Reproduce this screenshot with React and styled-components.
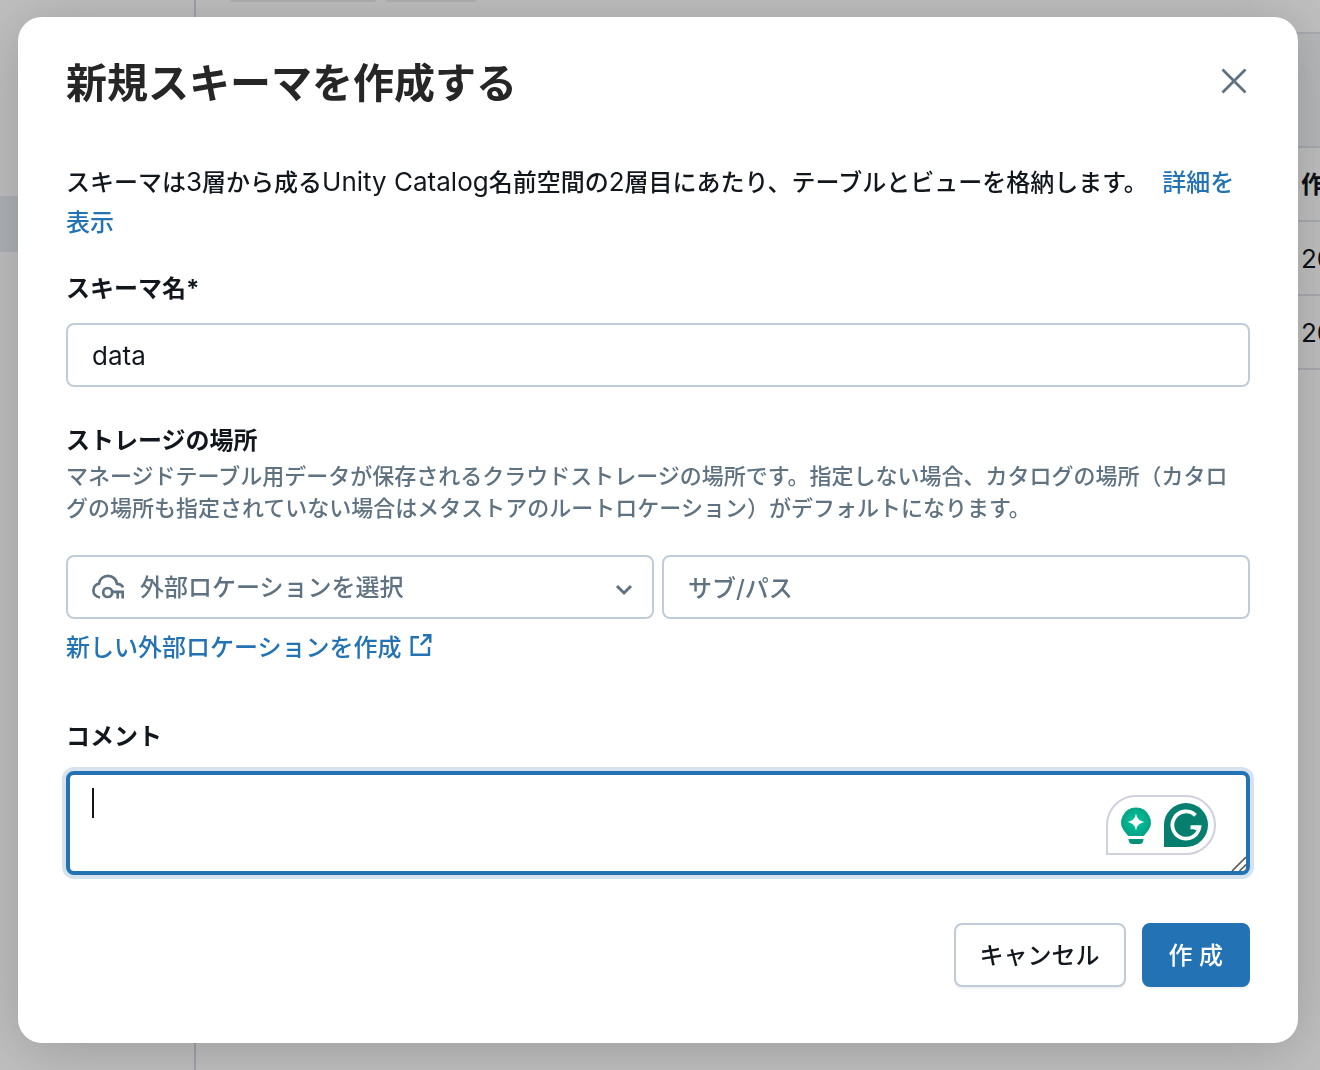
import React from 'react'
import styled, { createGlobalStyle } from 'styled-components'

const GlobalStyle = createGlobalStyle`
* {
  box-sizing: border-box;
}
body {
  margin: 0;
  overflow: hidden;
  background-color: #ffffff;
  color: #11171c;
  font-family: Inter, "Noto Sans CJK JP", sans-serif;
  font-size: 24px;
  font-weight: 500;
  line-height: 40px;
}
input, select, textarea, button {
  font: inherit;
  color: inherit;
}
`

const Page = styled.div`
display: grid;
grid-template-columns: 196px 1fr;
min-height: 100vh;
`

const Sidebar = styled.div`
padding-top: 196px;
border-right: solid 2px #d1d9e1;
`

const SidebarSelected = styled.div`
height: 56px;
background-color: #e8eef4;
`

const Content = styled.div`
display: flex;
flex-direction: column;
overflow: hidden;
`

const Chips = styled.div`
display: flex;
gap: 10px;
height: 32px;
padding-left: 34px;
`

const Chip = styled.div`
width: ${props => props.$wide ? '146px' : '90px'};
height: 2px;
background-color: #ebebeb;
border-radius: 0 0 4px 4px;
`

const Banner = styled.div`
height: 116px;
background-color: #f3f5f8;
border-top: solid 2px #e0e4ea;
border-bottom: solid 2px #e0e4ea;
`

const Table = styled.table`
margin-left: 1098px;
border-spacing: 0;
white-space: nowrap;
`

const Cell = styled.td`
height: 74px;
padding: 2px 0 0 7px;
border-bottom: solid 2px #e0e4ea;
font-size: ${props => props.$head ? '24px' : '26px'};
font-weight: ${props => props.$head ? 700 : 400};
text-align: left;
`

const Overlay = styled.div`
position: fixed;
inset: 0;
padding: 17px 22px 27px 18px;
background-color: rgba(0, 0, 0, 0.25);
`

const Modal = styled.div`
padding: 38px 48px 56px;
background-color: #ffffff;
border-radius: 24px;
box-shadow: 0 6px 60px rgba(0, 0, 0, 0.2);
`

const Header = styled.div`
display: flex;
align-items: flex-start;
justify-content: space-between;
margin-bottom: 52px;
`

const Title = styled.h2`
margin: 0;
color: #262626;
font-size: 41px;
line-height: 56px;
font-weight: 700;
`

const CloseButton = styled.button`
display: flex;
align-items: center;
height: 52px;
padding: 0;
border: none;
background: none;
color: #5f7281;
cursor: pointer;
`

const Text = styled.p`
margin: 0 0 27px;
`

const Latin = styled.span`
font-size: 26px;
font-weight: 400;
line-height: 1;
`

const Link = styled.a`
color: #2272b4;
text-decoration: none;
`

const MoreLink = styled(Link)`
margin-left: 8px;
`

const Label = styled.label`
display: block;
line-height: 38px;
font-weight: 700;
`

const Hint = styled.p`
margin: 0 0 31px;
padding-right: 8px;
color: #5f7281;
font-size: 22px;
line-height: 32px;
`

const Input = styled.input`
display: block;
width: 100%;
height: 64px;
padding: 0 24px;
background-color: #ffffff;
border: solid 2px #c0cdd8;
border-radius: 8px;
outline: none;
font-size: 26px;
font-weight: 400;

&::placeholder {
  color: #5f7281;
  font-size: 24px;
  font-weight: 500;
  opacity: 1;
}
`

const NameField = styled.div`
display: flex;
flex-direction: column;
gap: 15px;
margin-bottom: 35px;
`

const LocationRow = styled.div`
display: grid;
grid-template-columns: 1fr 1fr;
gap: 8px;
margin-bottom: 9px;
`

const SelectBox = styled.div`
position: relative;
`

const Select = styled.select`
appearance: none;
display: block;
width: 100%;
height: 64px;
padding: 2px 64px 0 72px;
background-color: #ffffff;
color: #5f7281;
border: solid 2px #c0cdd8;
border-radius: 8px;
outline: none;
`

const SelectIcon = styled.span`
position: absolute;
top: 16px;
left: ${props => props.$right ? 'auto' : '26px'};
right: ${props => props.$right ? '14px' : 'auto'};
display: flex;
color: #5f7281;
pointer-events: none;
`

const NewLocation = styled(Link)`
display: flex;
align-items: center;
gap: 8px;
width: max-content;
margin-bottom: 50px;
`

const CommentField = styled.div`
display: flex;
flex-direction: column;
gap: 15px;
margin-bottom: 48px;
`

const CommentBox = styled.div`
position: relative;
height: 104px;
`

const TextArea = styled.textarea`
display: block;
width: 100%;
height: 100%;
padding: 8px 22px;
background-color: #ffffff;
border: solid 4px #2272b4;
border-radius: 8px;
box-shadow: 0 0 0 4px #d6e3ef;
outline: none;
resize: none;
caret-color: transparent;
`

const Caret = styled.span`
position: absolute;
top: 17px;
left: 26px;
width: 2px;
height: 30px;
background-color: #11171c;
`

const ResizeGrip = styled.svg`
position: absolute;
right: 4px;
bottom: 4px;
`

const Assistant = styled.div`
position: absolute;
top: 24px;
right: 34px;
display: flex;
align-items: center;
justify-content: space-between;
width: 110px;
height: 60px;
padding: 0 6px 0 12px;
background-color: #ffffff;
border: solid 2px #cfd1de;
border-radius: 30px 30px 30px 0;
`

const Footer = styled.div`
display: flex;
justify-content: flex-end;
gap: 16px;
`

const Button = styled.button`
height: 64px;
padding: 2px ${props => props.$primary ? '25px' : '24px'} 0;
background-color: ${props => props.$primary ? '#2272b4' : '#ffffff'};
color: ${props => props.$primary ? '#ffffff' : '#11171c'};
border: solid 2px ${props => props.$primary ? '#2272b4' : '#c0cdd8'};
border-radius: 8px;
box-shadow: 0 2px 1px rgba(0, 0, 0, 0.05);
cursor: pointer;
`

const CloseIcon = () => (
  <svg width="32" height="32" viewBox="0 0 32 32" fill="none" stroke="currentColor" strokeWidth="2.8">
    <path d="M4.5 4.5 27.5 27.5M27.5 4.5 4.5 27.5" />
  </svg>
)

const CloudKeyIcon = () => (
  <svg width="32" height="32" viewBox="0 0 32 32" fill="none" stroke="currentColor" strokeWidth="2.7">
    <path d="M8 26.500C4 25.900 1.400 23.100 1.400 19.500c0-3.600 2.500-6.200 5.600-6.800C7.700 8.100 11.300 4.900 16 4.900s8.400 3.300 9 7.900c3 .1 5.200 1.500 6.100 3.600" />
    <circle cx="15.700" cy="21.500" r="4.500" />
    <path d="M20.300 20.900H30.700V27.500M25.700 20.900V27.500" />
  </svg>
)

const ChevronIcon = () => (
  <svg width="32" height="32" viewBox="0 0 32 32" fill="none" stroke="currentColor" strokeWidth="3">
    <path d="M9 15l7 7 7-7" />
  </svg>
)

const NewWindowIcon = () => (
  <svg width="22" height="28" viewBox="0 0 22 28" fill="none" stroke="currentColor" strokeWidth="2.4">
    <path d="M9 3.300H1.700V20.700H19V13" />
    <path d="M13 1.300H20.300V8.700M20 1.600 10.800 10.800" />
  </svg>
)

const BulbIcon = () => (
  <svg width="32" height="40" viewBox="0 -1 32 40">
    <defs>
      <radialGradient id="bulb">
        <stop offset="0" stopColor="#00c9a0" />
        <stop offset="1" stopColor="#06a283" />
      </radialGradient>
    </defs>
    <path d="M16 1.500a14.700 14.700 0 0 1 11 24.500c-2 2.200-2.500 3.500-3.500 4H8.500c-1-.5-1.500-1.800-3.500-4A14.700 14.700 0 0 1 16 1.500z" fill="url(#bulb)" />
    <path d="M16 7.500c1.200 5.300 3.200 7.200 8.500 8.500-5.300 1.300-7.300 3.200-8.500 8.500-1.200-5.300-3.200-7.200-8.500-8.500 5.300-1.300 7.300-3.200 8.500-8.500z" fill="#ffffff" />
    <path d="M8.500 33h15c0 3-1.500 5-4 5h-7c-2.500 0-4-2-4-5z" fill="#069379" />
  </svg>
)

const GrammarIcon = () => (
  <svg width="44" height="44" viewBox="0 0 44 44">
    <path d="M22 0a22 22 0 0 1 0 44H0V22A22 22 0 0 1 22 0z" fill="#067f6f" />
    <path d="M31.500 12.300A13.600 13.600 0 1 0 35.400 24.300H26.500" fill="none" stroke="#ffffff" strokeWidth="3.800" />
    <path d="M27 22.400h10.300l-1 4L31 27z" fill="#ffffff" />
  </svg>
)

class App extends React.Component {

  render () {

    return (

      <>
        <GlobalStyle />

        <Page>
          <Sidebar>
            <SidebarSelected />
          </Sidebar>

          <Content>
            <Chips>
              <Chip $wide />
              <Chip />
            </Chips>
            <Banner />
            <Table>
              <thead>
                <tr><Cell as="th" $head>作成</Cell></tr>
              </thead>
              <tbody>
                <tr><Cell>20</Cell></tr>
                <tr><Cell>20</Cell></tr>
              </tbody>
            </Table>
          </Content>
        </Page>

        <Overlay>
          <Modal role="dialog" aria-labelledby="title">
            <Header>
              <Title id="title">新規スキーマを作成する</Title>
              <CloseButton type="button" aria-label="閉じる"><CloseIcon /></CloseButton>
            </Header>

            <Text>
              スキーマは<Latin>3</Latin>層から成る<Latin>Unity Catalog</Latin>名前空間の<Latin>2</Latin>層目にあたり、テーブルとビューを格納します。 <MoreLink href="#">詳細を表示</MoreLink>
            </Text>

            <NameField>
              <Label htmlFor="name">スキーマ名*</Label>
              <Input id="name" defaultValue="data" />
            </NameField>

            <Label htmlFor="location">ストレージの場所</Label>
            <Hint>
              マネージドテーブル用データが保存されるクラウドストレージの場所です。指定しない場合、カタログの場所（カタログの場所も指定されていない場合はメタストアのルートロケーション）がデフォルトになります。
            </Hint>

            <LocationRow>
              <SelectBox>
                <Select id="location">
                  <option>外部ロケーションを選択</option>
                </Select>
                <SelectIcon><CloudKeyIcon /></SelectIcon>
                <SelectIcon $right><ChevronIcon /></SelectIcon>
              </SelectBox>
              <Input aria-label="サブ/パス" placeholder="サブ/パス" />
            </LocationRow>

            <NewLocation href="#">
              新しい外部ロケーションを作成
              <NewWindowIcon />
            </NewLocation>

            <CommentField>
              <Label htmlFor="comment">コメント</Label>
              <CommentBox>
                <TextArea id="comment" />
                <Caret />
                <Assistant>
                  <BulbIcon />
                  <GrammarIcon />
                </Assistant>
                <ResizeGrip width="16" height="16" viewBox="0 0 16 16" fill="none" stroke="#5c5c5c" strokeWidth="1.700">
                  <path d="M2 16 16 2M9.500 16l6.500-6.500" />
                </ResizeGrip>
              </CommentBox>
            </CommentField>

            <Footer>
              <Button type="button">キャンセル</Button>
              <Button type="button" $primary>作 成</Button>
            </Footer>
          </Modal>
        </Overlay>
      </>

    )
  }
}

export default App
